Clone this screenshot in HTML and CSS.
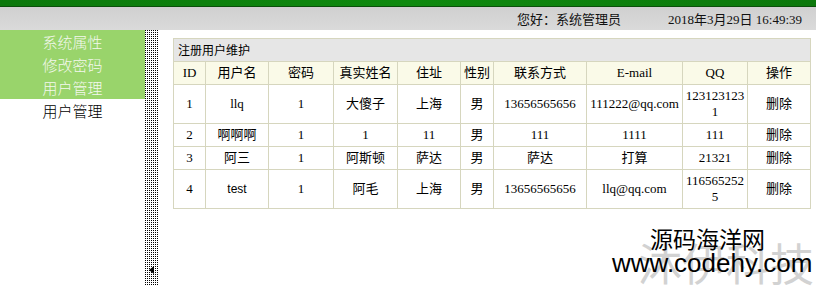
FILE: index.html
```html
<!DOCTYPE html>
<html lang="zh-CN">
<head>
  <meta charset="UTF-8">
  <title>用户管理</title>
  <link rel="stylesheet" href="styles.css">
</head>
<body>
  <div class="topbar"></div>
  <div class="infobar">
    <span>您好：系统管理员</span>
    <span class="date">2018年3月29日 16:49:39</span>
  </div>
  <div class="main">
    <ul class="menu">
      <li class="on">系统属性</li>
      <li class="on">修改密码</li>
      <li class="on">用户管理</li>
      <li>用户管理</li>
    </ul>
    <div class="splitter">
      <span class="arrow"></span>
    </div>
    <div class="content">
      <table class="users">
        <colgroup>
          <col style="width:32px"><col style="width:63px"><col style="width:65px"><col style="width:64px"><col style="width:63px">
          <col style="width:33px"><col style="width:93px"><col style="width:96px"><col style="width:65px"><col style="width:63px">
        </colgroup>
        <tr class="title"><th colspan="10">注册用户维护</th></tr>
        <tr class="head">
          <th>ID</th><th>用户名</th><th>密码</th><th>真实姓名</th><th>住址</th>
          <th>性别</th><th>联系方式</th><th>E-mail</th><th>QQ</th><th>操作</th>
        </tr>
        <tr>
          <td>1</td><td>llq</td><td>1</td><td>大傻子</td><td>上海</td>
          <td>男</td><td>13656565656</td><td>111222@qq.com</td><td>1231231231</td><td>删除</td>
        </tr>
        <tr>
          <td>2</td><td>啊啊啊</td><td>1</td><td>1</td><td>11</td>
          <td>男</td><td>111</td><td>1111</td><td>111</td><td>删除</td>
        </tr>
        <tr>
          <td>3</td><td>阿三</td><td>1</td><td>阿斯顿</td><td>萨达</td>
          <td>男</td><td>萨达</td><td>打算</td><td>21321</td><td>删除</td>
        </tr>
        <tr>
          <td>4</td><td class="sans">test</td><td>1</td><td>阿毛</td><td>上海</td>
          <td>男</td><td>13656565656</td><td>llq@qq.com</td><td>1165652525</td><td>删除</td>
        </tr>
      </table>
    </div>
  </div>
  <div class="watermark">
    <span class="wm-back">沐伊科技</span>
    <span class="wm-name">源码海洋网</span>
    <span class="wm-url">www.codehy.com</span>
  </div>
</body>
</html>
```

FILE: styles.css
```css
html, body {
  height: 100%;
}

body {
  margin: 0;
  position: relative;
  overflow: hidden;
  background: #fff;
  color: #000;
  font-family: "Liberation Serif", "Noto Sans CJK SC", serif;
  font-size: 13px;
}

.topbar {
  height: 6px;
  background: linear-gradient(90deg, #0b780b 0%, #0f8a0f 50%, #0b780b 100%);
  border-bottom: 1px solid #0a4f0a;
}

.infobar {
  height: 23px;
  background: linear-gradient(#d0d0d0, #dadada);
  display: flex;
  justify-content: flex-end;
  align-items: center;
  gap: 47px;
  padding-right: 14px;
  font-family: "Noto Sans CJK SC", sans-serif;
  font-size: 13px;
  color: #111;
}

.infobar .date {
  font-family: "Liberation Serif", "Noto Sans CJK SC", serif;
  font-size: 13px;
}

.main {
  display: flex;
  height: calc(100% - 30px);
}

.menu {
  list-style: none;
  margin: 0;
  padding: 0;
  width: 145px;
  flex: none;
  font-family: "Noto Sans CJK SC", sans-serif;
  font-size: 15px;
  font-weight: 300;
}

.menu li {
  height: 23px;
  line-height: 23px;
  text-align: center;
  color: #000;
}

.menu li.on {
  background: #99d46b;
  color: #f4f8ee;
}

.splitter {
  width: 13px;
  flex: none;
  background-color: #000;
  background-image:
    linear-gradient(90deg, transparent 1px, #fff 1px),
    linear-gradient(transparent 1px, #fff 1px);
  background-size: 2px 2px;
  display: flex;
  flex-direction: column;
  align-items: center;
}

.arrow {
  margin-top: auto;
  margin-bottom: 12px;
  width: 0;
  height: 0;
  border-top: 4px solid transparent;
  border-bottom: 4px solid transparent;
  border-right: 5px solid #000;
}

.content {
  flex: 1;
  padding: 8px 6px 0 15px;
}

.users {
  width: 637px;
  border-collapse: collapse;
  table-layout: fixed;
  border: 1px solid #d6d6be;
}

.users th,
.users td {
  border: 1px solid #d6d6be;
  text-align: center;
  vertical-align: middle;
  padding: 3px 2px;
  line-height: 16px;
  font-weight: normal;
  word-break: break-all;
}

.users .title th {
  background: #e6e6e6;
  text-align: left;
  padding-left: 4px;
  font-family: "Noto Sans CJK SC", sans-serif;
  font-size: 12px;
}

.users .head th {
  background: #fafae8;
}

.users .sans {
  font-family: "Liberation Sans", sans-serif;
  font-size: 12px;
}

/* watermark stamped over the screenshot corner */
.watermark {
  position: absolute;
  right: 4px;
  bottom: 4px;
  width: 200px;
  height: 56px;
}

.watermark span {
  display: block;
  position: relative;
}

.wm-back {
  position: absolute !important;
  left: 26px;
  top: 12px;
  font-family: "Noto Sans CJK SC", sans-serif;
  font-size: 44px;
  line-height: 48px;
  color: #d2d2d2;
  white-space: nowrap;
}

.wm-name {
  font-family: "Noto Sans CJK SC", sans-serif;
  font-size: 23px;
  line-height: 24px;
  padding-left: 38px;
  color: #000;
}

.wm-url {
  font-family: "Liberation Sans", sans-serif;
  font-size: 26px;
  line-height: 26px;
  text-align: right;
  color: #000;
  white-space: nowrap;
}
```
